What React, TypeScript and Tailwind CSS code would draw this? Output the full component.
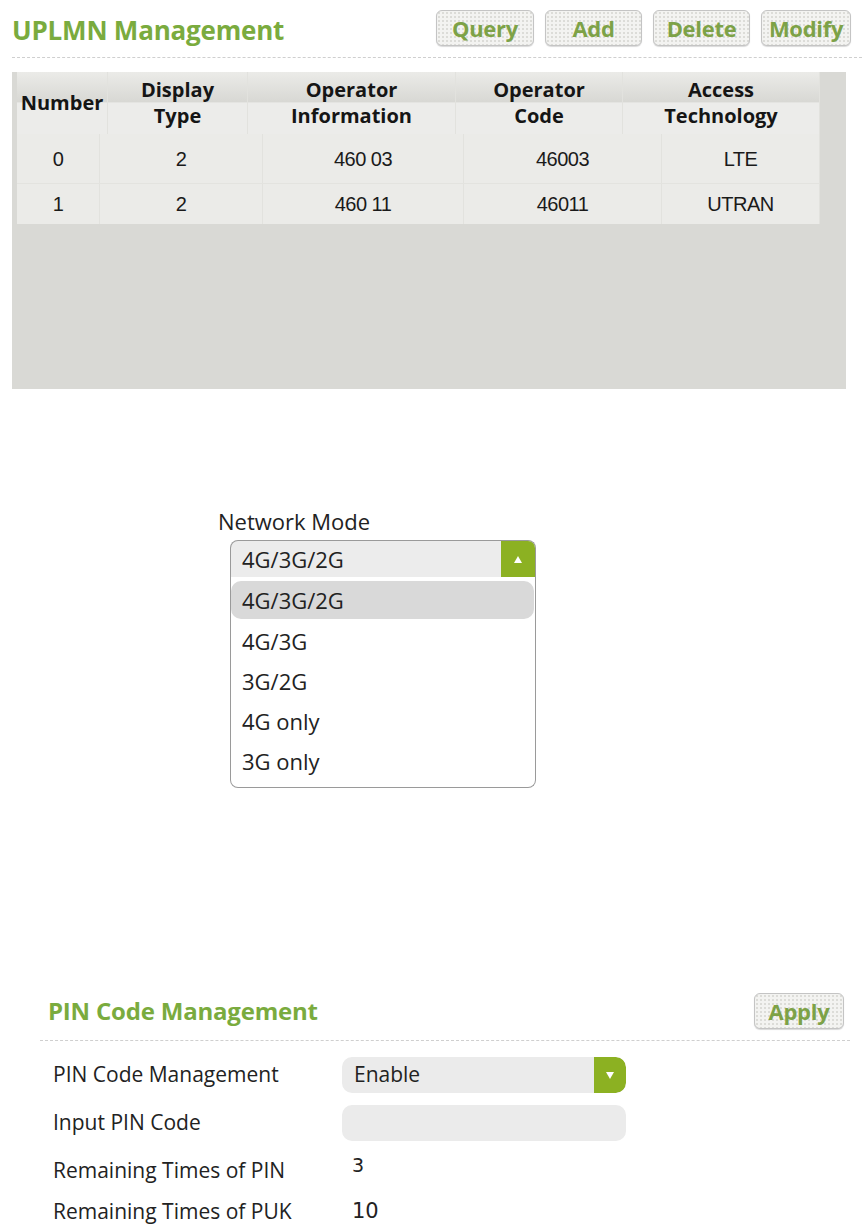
import { ReactNode } from "react";

const headers = [
  { label: ["Number"], w: "w-[91px]" },
  { label: ["Display", "Type"], w: "w-[140px]" },
  { label: ["Operator", "Information"], w: "w-[208px]" },
  { label: ["Operator", "Code"], w: "w-[167px]" },
  { label: ["Access", "Technology"], w: "w-[197px]" },
];

const bodyWidths = ["w-[83px]", "w-[163px]", "w-[201px]", "w-[198px]", "w-[158px]"];

const rows = [
  { h: "h-[50px]", cells: ["0", "2", "460 03", "46003", "LTE"] },
  { h: "h-[40px]", cells: ["1", "2", "460 11", "46011", "UTRAN"] },
];

const networkModes = ["4G/3G/2G", "4G/3G", "3G/2G", "4G only", "3G only"];

function GreenButton({ children, w }: { children: ReactNode; w: string }) {
  return (
    <button
      className={`${w} h-[36px] rounded-[6px] border border-[#c4c4c4] bg-[#f3f3f1] bg-[radial-gradient(#dcdcd8_1px,transparent_1px)] bg-[length:4px_4px] text-[22px] font-bold text-[#7da247] tracking-[-0.3px] shadow-[0_1px_1px_rgba(0,0,0,0.15)] flex items-center justify-center`}
    >
      {children}
    </button>
  );
}

function Caret({ up }: { up?: boolean }) {
  return (
    <svg width="10" height="9" viewBox="0 0 10 9">
      {up ? <polygon points="5,1 9,8 1,8" fill="#fff" /> : <polygon points="1,1 9,1 5,8" fill="#fff" />}
    </svg>
  );
}

export default function App() {
  return (
    <div className="w-[862px] h-[1228px] bg-white overflow-hidden" style={{ fontFamily: '"Open Sans", "Noto Sans", sans-serif' }}>
      {/* UPLMN header */}
      <div className="flex h-[46px] items-center justify-between pl-[12px] pr-[11px] pt-[10px]">
        <h1 className="text-[26px] leading-[32px] pt-[4px] font-bold text-[#7aab3e] tracking-[-0.2px]">UPLMN Management</h1>
        <div className="flex gap-[11px]">
          <GreenButton w="w-[98px]">Query</GreenButton>
          <GreenButton w="w-[97px]">Add</GreenButton>
          <GreenButton w="w-[97px]">Delete</GreenButton>
          <GreenButton w="w-[90px]">Modify</GreenButton>
        </div>
      </div>
      <div className="ml-[12px] mt-[11px] border-t border-dashed border-[#cfcfcf]" />

      {/* table area */}
      <div className="ml-[12px] mt-[14px] w-[834px] h-[317px] bg-[#d9d9d5] pl-[5px]">
        <div className="w-[803px]">
          <div className="flex h-[62px] bg-[linear-gradient(#ebebe8_0%,#d8d8d4_48%,#ececea_50%,#ececea_100%)]">
            {headers.map((h, i) => (
              <div
                key={i}
                className={`${h.w} flex flex-col items-center justify-center border-r border-[#e2e2de] text-[20px] leading-[26px] font-bold text-[#151515]`}
              >
                {h.label.map((l) => (
                  <span key={l}>{l}</span>
                ))}
              </div>
            ))}
          </div>
          {rows.map((r, ri) => (
            <div key={ri} className={`flex ${r.h} bg-[#ebebe8] ${ri === 0 ? "border-b border-[#e3e3df]" : ""}`}>
              {r.cells.map((c, ci) => (
                <div
                  key={ci}
                  className={`${bodyWidths[ci]} flex items-center justify-center border-r border-[#e2e2de] text-[20px] text-[#1a1a1a] tracking-[-0.5px]`}
                  style={{ fontFamily: '"Liberation Sans", sans-serif' }}
                >
                  {c}
                </div>
              ))}
            </div>
          ))}
        </div>
      </div>

      {/* network mode */}
      <div className="mt-[118px] ml-[218px]">
        <div className="text-[22px] text-[#222] leading-[28px]">Network Mode</div>
        <div className="ml-[12px] mt-[5px] w-[306px]">
          <div className="flex h-[37px] rounded-t-[8px] border border-b-0 border-[#9a9a9a] bg-[#ececec] overflow-hidden">
            <div className="flex-1 flex items-center pl-[11px] text-[22px] text-[#222]">4G/3G/2G</div>
            <div className="w-[34px] bg-[#8cb122] flex items-center justify-center">
              <Caret up />
            </div>
          </div>
          <div className="h-[211px] rounded-b-[8px] border border-t-0 border-[#9a9a9a] bg-white pt-[4px] pr-[1px]">
            {networkModes.map((m, i) => (
              <div
                key={m}
                className={`flex items-center pl-[11px] text-[22px] text-[#222] ${i === 0 ? "h-[38px] rounded-[10px] bg-[#d9d9d9] mb-[2px]" : "h-[40px]"}`}
              >
                {m}
              </div>
            ))}
          </div>
        </div>
      </div>

      {/* PIN management */}
      <div className="mt-[205px] ml-[40px] w-[810px]">
        <div className="flex items-center justify-between pl-[8px] pr-[6px]">
          <h2 className="text-[24px] font-bold text-[#7aab3e] tracking-[-0.2px]">PIN Code Management</h2>
          <GreenButton w="w-[90px]">Apply</GreenButton>
        </div>
        <div className="mt-[11px] border-t border-dashed border-[#cfcfcf]" />
        <div className="pl-[13px] pt-[16px] text-[21px] text-[#222]">
          <div className="flex items-center h-[36px]">
            <div className="w-[289px]">PIN Code Management</div>
            <div className="flex w-[284px] h-[36px] rounded-[10px] bg-[#ebebeb] overflow-hidden">
              <div className="flex-1 flex items-center pl-[12px]">Enable</div>
              <div className="w-[32px] bg-[#8cb122] rounded-r-[10px] flex items-center justify-center">
                <Caret />
              </div>
            </div>
          </div>
          <div className="flex items-center h-[36px] mt-[12px]">
            <div className="w-[289px]">Input PIN Code</div>
            <div className="w-[284px] h-[36px] rounded-[10px] bg-[#ebebeb]" />
          </div>
          <div className="flex items-center h-[40px] mt-[10px]">
            <div className="w-[299px]">Remaining Times of PIN</div>
            <div className="mb-[12px] text-[19px]" style={{ fontFamily: '"DejaVu Sans", sans-serif' }}>3</div>
          </div>
          <div className="flex items-center h-[40px] mt-[1px]">
            <div className="w-[299px]">Remaining Times of PUK</div>
            <div className="text-[21px]" style={{ fontFamily: '"DejaVu Sans", sans-serif' }}>10</div>
          </div>
        </div>
      </div>
    </div>
  );
}
